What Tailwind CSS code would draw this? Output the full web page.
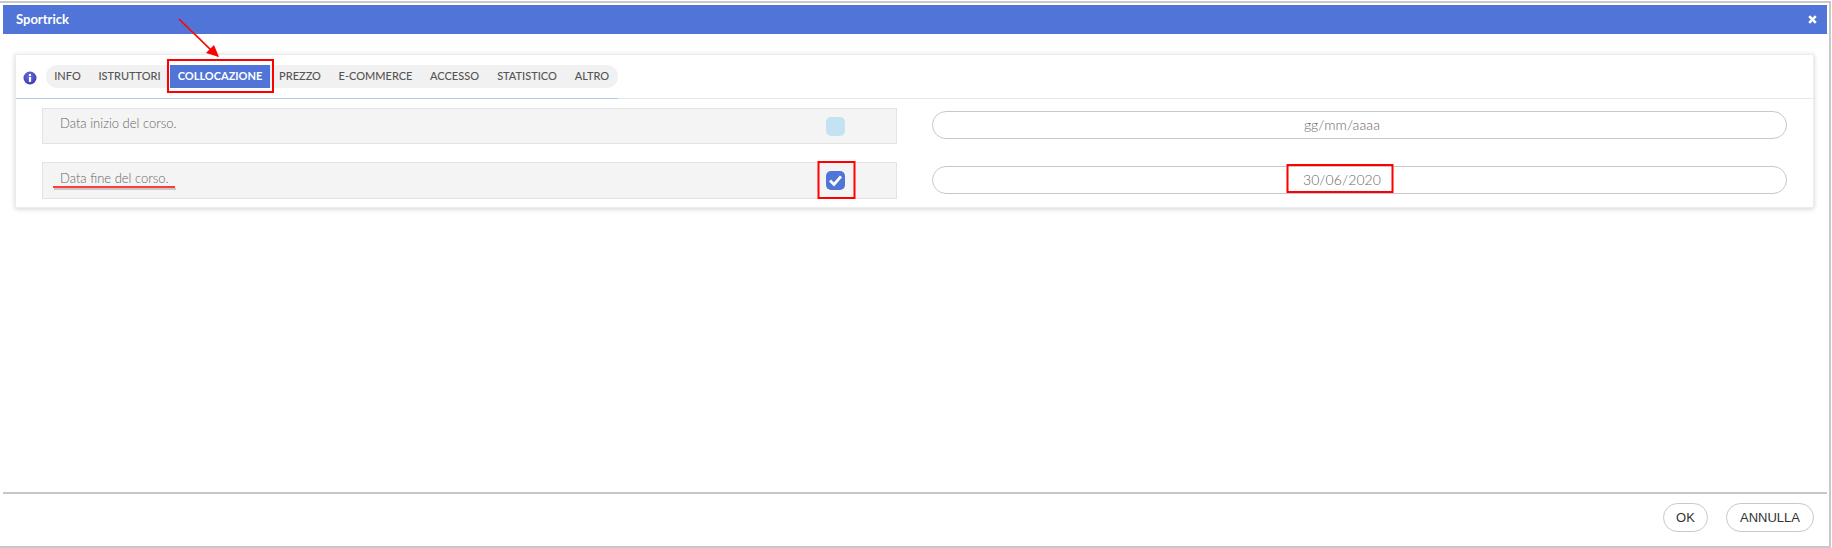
<!DOCTYPE html>
<html lang="it">
<head>
  <meta charset="UTF-8" />
  <title>Sportrick</title>
  <script src="https://cdn.jsdelivr.net/npm/@tailwindcss/browser@4"></script>
</head>
<body class="bg-white font-['Lato','Liberation_Sans',sans-serif]">
  <div class="relative w-[1832px] h-[548px] pt-px overflow-hidden">
    <div class="w-[1831px] h-[547px] border-t-2 border-r-2 border-b-2 border-[#c8c8c8] pl-[3px] pr-[2px] pt-[2px] flex flex-col">

      <div class="h-[29px] shrink-0 bg-[#5074d8] flex items-center justify-between pl-[13px] pr-[10px] text-white">
        <span class="text-[13px] font-bold">Sportrick</span>
        <svg class="w-[9px] h-[9px]" viewBox="0 0 9 9"><path d="M1.2 1.2 7.8 7.8M7.8 1.2 1.2 7.8" stroke="#fff" stroke-width="2.6" /></svg>
      </div>

      <div class="flex-1 pt-5 pl-3 pr-[13px]">
        <div class="bg-white border border-[#ececec] shadow-[0_1px_5px_rgba(0,0,0,0.18)] h-[154px]">
          <div class="h-[43px] border-b border-[#e8e8e8] box-content">
            <div class="h-[43px] w-[595px] box-content border-b border-[#a9cbec] flex items-center pl-[7px]">
              <svg class="w-[14px] h-[14px] mr-[9px] mt-[3px]" viewBox="0 0 14 14">
                <defs>
                  <radialGradient id="infoBlue" cx="45%" cy="35%" r="70%">
                    <stop offset="0" stop-color="#6a6ce0" />
                    <stop offset="1" stop-color="#3a3aa8" />
                  </radialGradient>
                </defs>
                <circle cx="7" cy="7" r="6.5" fill="url(#infoBlue)" />
                <circle cx="7" cy="3.9" r="1.2" fill="#fff" />
                <rect x="5.9" y="5.9" width="2.2" height="5" fill="#fff" />
              </svg>
              <div class="flex h-[23px] w-[572px] items-stretch rounded-full bg-[#f1f1f1] text-[11px] font-medium text-[#555] overflow-hidden mt-[-1px]">
                <span class="flex items-center justify-center w-[43px]">INFO</span>
                <span class="flex items-center justify-center w-[81px]">ISTRUTTORI</span>
                <span class="flex items-center justify-center w-[100px] bg-[#5074d8] text-white font-bold">COLLOCAZIONE</span>
                <span class="flex items-center justify-center w-[60px]">PREZZO</span>
                <span class="flex items-center justify-center w-[91px]">E-COMMERCE</span>
                <span class="flex items-center justify-center w-[67px]">ACCESSO</span>
                <span class="flex items-center justify-center w-[78px]">STATISTICO</span>
                <span class="flex items-center justify-center w-[52px]">ALTRO</span>
              </div>
            </div>
          </div>

          <div class="pt-[9px] pl-[26px] grid grid-cols-[855px_855px] gap-x-[35px] gap-y-[18px] text-[13px] font-light text-[#666]">
            <div class="h-[36px] bg-[#f4f4f4] border border-[#e3e3e3] flex items-center justify-between pl-[17px] pr-[51px]">
              <span class="pb-1">Data inizio del corso.</span>
              <span class="w-[19px] h-[19px] rounded-[5px] bg-[#c3e3f3]"></span>
            </div>
            <div class="h-[36px] pt-[3px]">
              <input class="w-full h-[28px] pb-px rounded-full border border-[#c8c8c8] bg-white pr-[35px] text-center text-[14px] tracking-[0.1px] placeholder:text-[#6e6464]" type="text" placeholder="gg/mm/aaaa" />
            </div>

            <div class="h-[37px] bg-[#f4f4f4] border border-[#e3e3e3] flex items-center justify-between pl-[17px] pr-[51px]">
              <span class="pb-1">Data fine del corso.</span>
              <span class="w-[19px] h-[19px] rounded-[5px] bg-[#5074d8] flex items-center justify-center">
                <svg class="w-[15px] h-[15px]" viewBox="0 0 15 15"><path d="M2 7.6 6 11.4 13 3.4" fill="none" stroke="#fff" stroke-width="2.8" /></svg>
              </span>
            </div>
            <div class="h-[37px] pt-[4px]">
              <input class="w-full h-[28px] pb-px rounded-full border border-[#c8c8c8] bg-white pr-[35px] text-center text-[14px] tracking-[0.1px] text-[#6e6464]" type="text" value="30/06/2020" />
            </div>
          </div>
        </div>
      </div>

      <div class="h-[54px] shrink-0 border-t-2 border-[#c8c8c8] flex justify-end gap-[18px] pt-[9px] pr-[13px] font-['Liberation_Sans',sans-serif] text-[13px] text-[#333]">
        <button class="w-[45px] h-[29px] rounded-full border border-[#c8c8c8] bg-white">OK</button>
        <button class="w-[88px] h-[29px] rounded-full border border-[#c8c8c8] bg-white">ANNULLA</button>
      </div>
    </div>

    <!-- red annotations drawn over the screenshot -->
    <svg class="absolute top-0 left-0 w-[1832px] h-[548px] pointer-events-none" viewBox="0 0 1832 548">
      <path d="M180 19 216 55" stroke="#888" stroke-width="2" opacity="0.35" transform="translate(2 2)" />
      <path d="M179 19 213 52" stroke="#f00" stroke-width="1.6" />
      <path d="M219 57 206 53 214 45Z" fill="#f00" />
      <rect x="168" y="60" width="105" height="32" fill="none" stroke="#f00" stroke-width="2" />
      <rect x="818.5" y="162" width="36" height="36" fill="none" stroke="#f00" stroke-width="2" />
      <rect x="1287.5" y="165" width="105" height="27" fill="none" stroke="#f00" stroke-width="2" />
      <path d="M53 188 175 188" stroke="#888" stroke-width="2" opacity="0.4" transform="translate(1 1)" />
      <path d="M53 187 175 187" stroke="#f00" stroke-width="1.4" />
    </svg>
  </div>
</body>
</html>
